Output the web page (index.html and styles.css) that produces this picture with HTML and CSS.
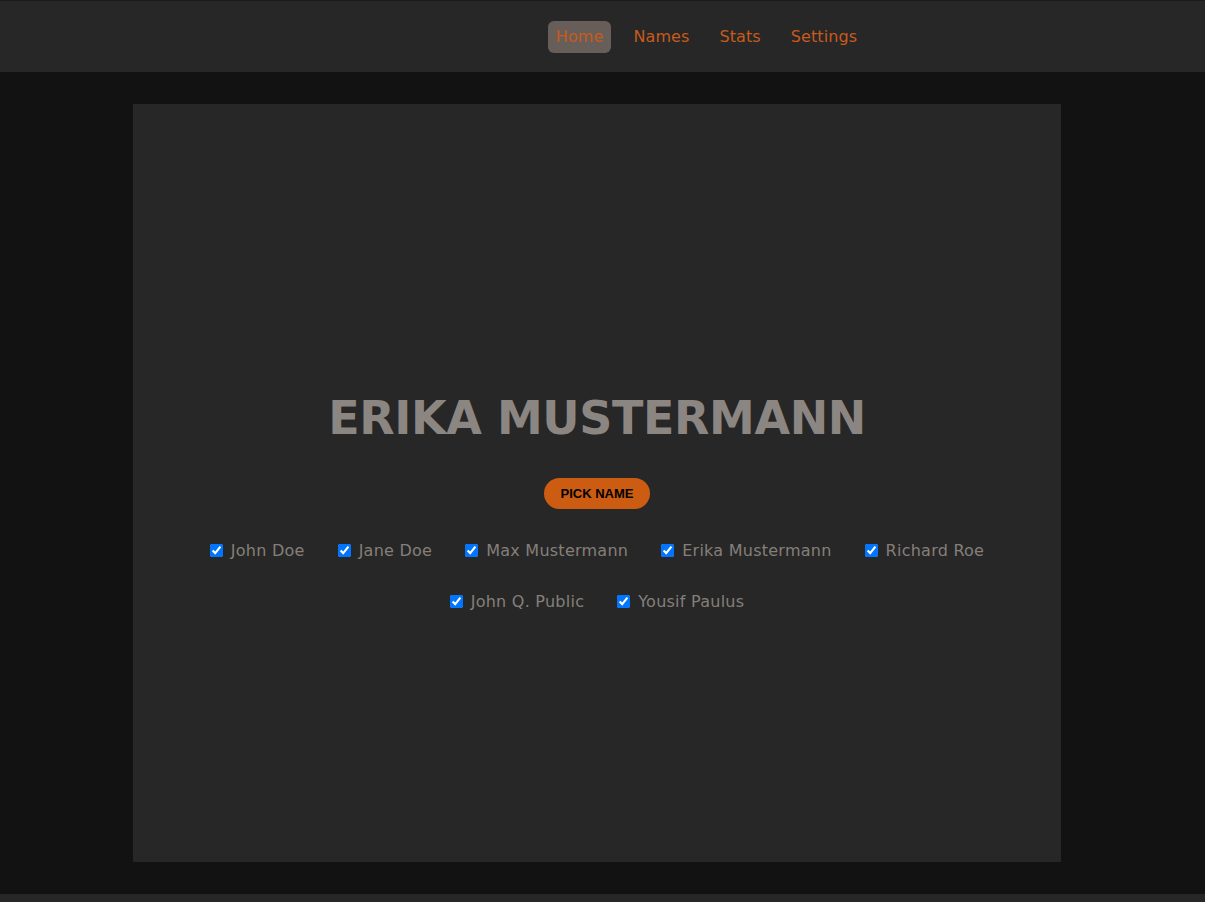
FILE: index.html
```html
<!DOCTYPE html>
<html lang="en">
<head>
<meta charset="utf-8">
<title>Name Picker</title>
<link rel="stylesheet" href="styles.css">
</head>
<body>
<header class="topbar">
  <nav class="nav">
    <a class="nav-link active" href="#">Home</a>
    <a class="nav-link" href="#">Names</a>
    <a class="nav-link" href="#">Stats</a>
    <a class="nav-link" href="#">Settings</a>
  </nav>
</header>
<main class="main">
  <section class="card">
    <h1 class="picked">ERIKA MUSTERMANN</h1>
    <button class="pick-btn" type="button">PICK NAME</button>
    <div class="names">
      <label class="name"><input type="checkbox" checked><span>John Doe</span></label>
      <label class="name"><input type="checkbox" checked><span>Jane Doe</span></label>
      <label class="name"><input type="checkbox" checked><span>Max Mustermann</span></label>
      <label class="name"><input type="checkbox" checked><span>Erika Mustermann</span></label>
      <label class="name"><input type="checkbox" checked><span>Richard Roe</span></label>
      <label class="name"><input type="checkbox" checked><span>John Q. Public</span></label>
      <label class="name"><input type="checkbox" checked><span>Yousif Paulus</span></label>
    </div>
  </section>
</main>
<footer class="footer"></footer>
</body>
</html>
```
FILE: styles.css
```css
* { box-sizing: border-box; }
html, body { margin: 0; padding: 0; }
body {
  background: #121212;
  font-family: "DejaVu Sans", "Open Sans", sans-serif;
  height: 902px;
  display: flex;
  flex-direction: column;
}
.topbar {
  height: 72px;
  background: #272727;
  border-top: 1px solid #1c1c1c;
  display: flex;
  align-items: center;
  justify-content: center;
  padding-left: 208px;
}
.nav {
  display: flex;
  gap: 14px;
  align-items: center;
}
.nav-link {
  color: #c65b1c;
  text-decoration: none;
  font-size: 16px;
  letter-spacing: 0.1px;
  padding: 0 8px;
  height: 32px;
  line-height: 32px;
  border-radius: 6px;
}
.nav-link.active {
  background: #685e59;
}
.main {
  flex: 1;
  padding: 32px 144px 32px 133px;
}
.card {
  background: #272727;
  height: 758px;
  display: flex;
  flex-direction: column;
  align-items: center;
  padding-top: 286px;
}
.picked {
  margin: 0;
  font-size: 46px;
  line-height: 56px;
  font-weight: bold;
  color: #8c8682;
  letter-spacing: -0.4px;
}
.pick-btn {
  margin-top: 32px;
  background: #cc5c12;
  color: #000;
  border: none;
  border-radius: 16px;
  width: 106px;
  height: 31px;
  font-family: "Liberation Sans", Arial, sans-serif;
  font-weight: bold;
  font-size: 13px;
  padding: 0;
}
.names {
  margin-top: 29px;
  width: 820px;
  display: flex;
  flex-wrap: wrap;
  justify-content: center;
  column-gap: 33px;
  row-gap: 27px;
}
.name {
  display: flex;
  align-items: center;
  height: 24px;
  color: #857f7a;
  font-size: 16px;
  letter-spacing: 0.25px;
}
.name input {
  margin: 0 8px 0 0;
  width: 13px;
  height: 13px;
}
.footer {
  height: 8px;
  background: #272727;
}
```
